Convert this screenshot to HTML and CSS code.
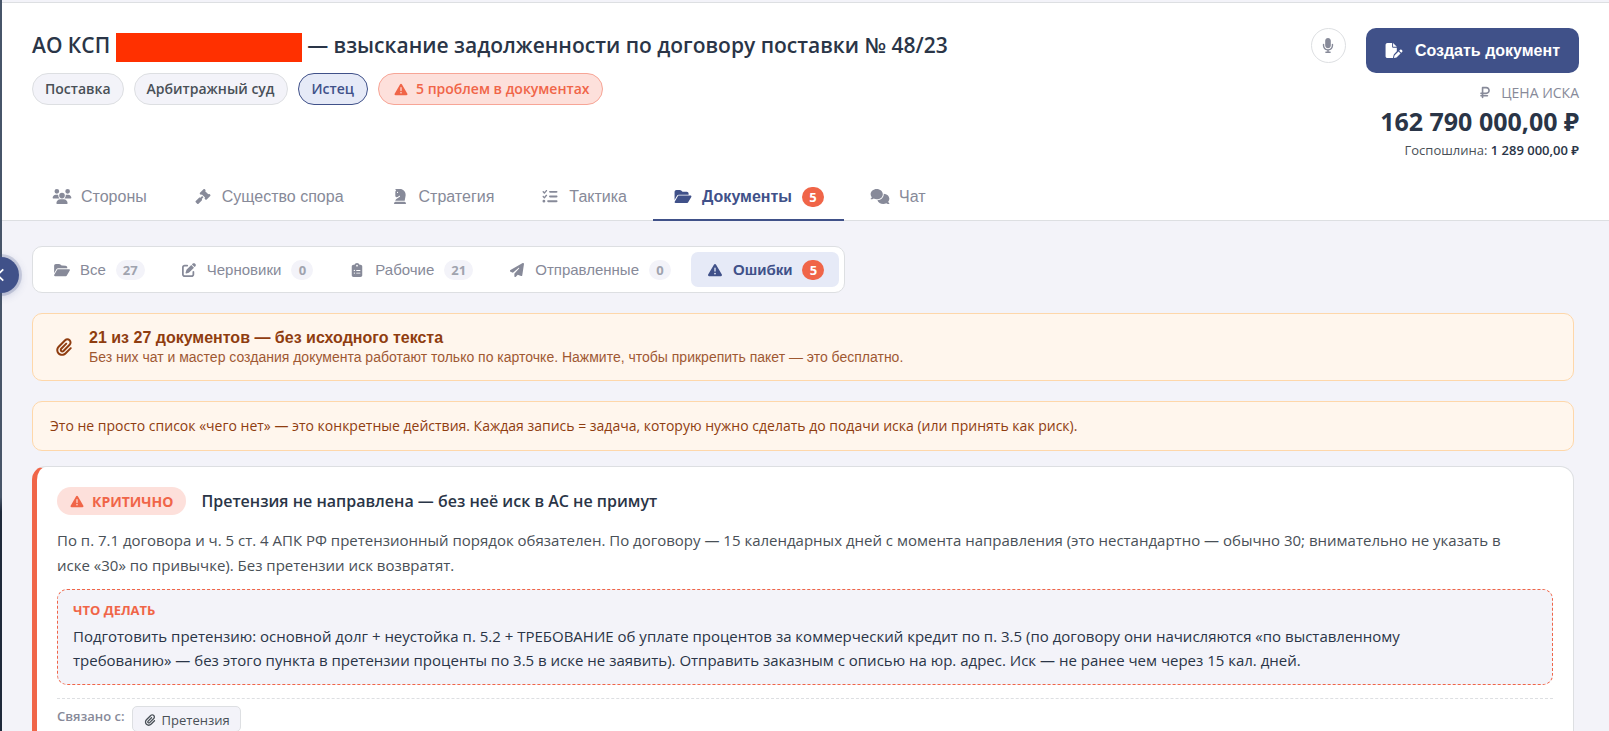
FILE: index.html
```html
<!DOCTYPE html>
<html lang="ru">
<head>
    <meta charset="UTF-8">
    <meta name="viewport" content="width=device-width, initial-scale=1.0">
    <title>Карточка дела</title>
    <link rel="stylesheet" href="styles.css">
</head>
<body>
    <!-- Иконки -->
    <svg class="icon-sprite" aria-hidden="true">
        <symbol id="i-warning" viewBox="0 0 512 512"><path d="M256 32c14.2 0 27.3 7.5 34.5 19.8l216 368c7.3 12.4 7.3 27.7 .2 40.1S486.3 480 472 480L40 480c-14.3 0-27.6-7.7-34.7-20.1s-7-27.8 .2-40.1l216-368C228.7 39.5 241.8 32 256 32zm0 128c-13.3 0-24 10.7-24 24l0 112c0 13.3 10.7 24 24 24s24-10.7 24-24l0-112c0-13.3-10.7-24-24-24zm32 224a32 32 0 1 0 -64 0 32 32 0 1 0 64 0z"/></symbol>
        <symbol id="i-folder" viewBox="0 0 576 512"><path d="M88.7 223.8L0 375.8 0 96C0 60.7 28.7 32 64 32l117.5 0c17 0 33.3 6.7 45.3 18.7l26.5 26.5c12 12 28.3 18.7 45.3 18.7L416 96c35.3 0 64 28.7 64 64l0 32-336 0c-22.8 0-43.8 12.1-55.3 31.8zm27.6 16.1C122.1 230 132.6 224 144 224l400 0c11.5 0 22 6.1 27.7 16.1s5.7 22.2-.1 32.1l-112 192C453.9 474 443.4 480 432 480L32 480c-11.5 0-22-6.1-27.7-16.1s-5.7-22.2 .1-32.1l112-192z"/></symbol>
        <symbol id="i-mic" viewBox="0 0 384 512"><path d="M192 0C139 0 96 43 96 96l0 160c0 53 43 96 96 96s96-43 96-96l0-160c0-53-43-96-96-96zM64 216c0-13.3-10.7-24-24-24s-24 10.7-24 24l0 40c0 89.1 66.2 162.7 152 174.4l0 33.6-48 0c-13.3 0-24 10.7-24 24s10.7 24 24 24l72 0 72 0c13.3 0 24-10.7 24-24s-10.7-24-24-24l-48 0 0-33.6c85.8-11.7 152-85.3 152-174.4l0-40c0-13.3-10.7-24-24-24s-24 10.7-24 24l0 40c0 70.7-57.3 128-128 128s-128-57.3-128-128l0-40z"/></symbol>
        <symbol id="i-users" viewBox="0 0 640 512"><path d="M144 0a80 80 0 1 1 0 160A80 80 0 1 1 144 0zM512 0a80 80 0 1 1 0 160A80 80 0 1 1 512 0zM0 298.7C0 239.8 47.8 192 106.7 192l42.7 0c15.9 0 31 3.5 44.6 9.7c-1.3 7.2-1.9 14.7-1.9 22.3c0 38.2 16.8 72.5 43.3 96c-.2 0-.4 0-.7 0L21.3 320C9.6 320 0 310.4 0 298.7zM405.3 320c-.2 0-.4 0-.7 0c26.6-23.5 43.3-57.8 43.3-96c0-7.6-.7-15-1.9-22.3c13.6-6.3 28.7-9.7 44.6-9.7l42.7 0C592.2 192 640 239.8 640 298.7c0 11.8-9.6 21.3-21.3 21.3l-213.3 0zM224 224a96 96 0 1 1 192 0 96 96 0 1 1 -192 0zM128 485.3C128 411.7 187.7 352 261.3 352l117.3 0C452.3 352 512 411.7 512 485.3c0 14.7-11.9 26.7-26.7 26.7l-330.7 0c-14.7 0-26.7-11.9-26.7-26.7z"/></symbol>
        <symbol id="i-gavel" viewBox="0 0 512 512"><path d="M318.6 9.4c-12.5-12.5-32.8-12.5-45.3 0l-120 120c-12.5 12.5-12.5 32.8 0 45.3l16 16c12.5 12.5 32.8 12.5 45.3 0l4-4L325.4 293.4l-4 4c-12.5 12.5-12.5 32.8 0 45.3l16 16c12.5 12.5 32.8 12.5 45.3 0l120-120c12.5-12.5 12.5-32.8 0-45.3l-16-16c-12.5-12.5-32.8-12.5-45.3 0l-4 4L330.6 74.6l4-4c12.5-12.5 12.5-32.8 0-45.3l-16-16zm-152 288c-12.5-12.5-32.8-12.5-45.3 0l-112 112c-12.5 12.5-12.5 32.8 0 45.3l48 48c12.5 12.5 32.8 12.5 45.3 0l112-112c12.5-12.5 12.5-32.8 0-45.3l-1.4-1.4L272 285.3 226.7 240 168 298.7l-1.4-1.4z"/></symbol>
        <symbol id="i-knight" viewBox="0 0 448 512"><path d="M96 48L82.7 61.3C70.7 73.3 64 89.5 64 106.5l0 132.4c0 10.7 5.3 20.7 14.2 26.6l10.6 7c14.3 9.6 32.7 10.7 48.1 3l3.2-1.6c2.6-1.3 5-2.8 7.3-4.5l49.4-37c6.6-5 15.7-5 22.3 0c10.2 7.7 9.9 23.1-.7 30.3L90.4 350C73.9 361.3 64 380 64 400l320 0 28.9-159c2.1-11.3 3.1-22.8 3.1-34.3l0-14.7C416 86 330 0 224 0L83.8 0C72.9 0 64 8.9 64 19.8c0 7.5 4.2 14.3 10.9 17.7L96 48zm24 68a20 20 0 1 1 40 0 20 20 0 1 1 -40 0zM22.6 473.4c-4.2 4.2-6.6 10-6.6 16C16 501.9 26.1 512 38.6 512l370.7 0c12.5 0 22.6-10.1 22.6-22.6c0-6-2.4-11.8-6.6-16L384 432 64 432 22.6 473.4z"/></symbol>
        <symbol id="i-checklist" viewBox="0 0 512 512"><path d="M152.1 38.2c9.9 8.9 10.7 24 1.8 33.9l-72 80c-4.4 4.9-10.6 7.8-17.2 7.9s-12.9-2.4-17.6-7L7 113C-2.3 103.6-2.3 88.4 7 79s24.6-9.4 33.9 0l22.1 22.1 55.1-61.2c8.9-9.9 24-10.7 33.9-1.8zm0 160c9.9 8.9 10.7 24 1.8 33.9l-72 80c-4.4 4.9-10.6 7.8-17.2 7.9s-12.9-2.4-17.6-7L7 273c-9.4-9.4-9.4-24.6 0-33.9s24.6-9.4 33.9 0l22.1 22.1 55.1-61.2c8.9-9.9 24-10.7 33.9-1.8zM224 96c0-17.7 14.3-32 32-32l224 0c17.7 0 32 14.3 32 32s-14.3 32-32 32l-224 0c-17.7 0-32-14.3-32-32zm0 160c0-17.7 14.3-32 32-32l224 0c17.7 0 32 14.3 32 32s-14.3 32-32 32l-224 0c-17.7 0-32-14.3-32-32zM160 416c0-17.7 14.3-32 32-32l288 0c17.7 0 32 14.3 32 32s-14.3 32-32 32l-288 0c-17.7 0-32-14.3-32-32zM48 368a48 48 0 1 1 0 96 48 48 0 1 1 0-96z"/></symbol>
        <symbol id="i-comments" viewBox="0 0 640 512"><path d="M208 352c114.9 0 208-78.8 208-176S322.9 0 208 0S0 78.8 0 176c0 38.6 14.7 74.3 39.6 103.4c-3.5 9.4-8.7 17.7-14.2 24.7c-4.8 6.2-9.7 11-13.3 14.3c-1.8 1.6-3.3 2.9-4.3 3.7c-.5 .4-.9 .7-1.1 .8l-.2 .2C1 327.2-1.4 334.4 .8 340.9S9.1 352 16 352c21.8 0 43.8-5.6 62.1-12.5c9.2-3.5 17.8-7.4 25.2-11.4C134.1 343.3 169.8 352 208 352zM448 176c0 112.3-99.1 196.9-216.5 207C255.8 457.4 336.4 512 432 512c38.2 0 73.9-8.7 104.7-23.9c7.5 4 16 7.9 25.2 11.4c18.3 6.9 40.3 12.5 62.1 12.5c6.9 0 13.1-4.5 15.2-11.1c2.1-6.6-.2-13.8-5.8-17.9l-.2-.2c-.2-.2-.6-.4-1.1-.8c-1-.8-2.5-2-4.3-3.7c-3.6-3.3-8.5-8.1-13.3-14.3c-5.5-7-10.7-15.4-14.2-24.7c24.9-29 39.6-64.7 39.6-103.4c0-92.8-84.9-168.9-192.6-175.5c.4 5.1 .6 10.3 .6 15.5z"/></symbol>
        <symbol id="i-edit" viewBox="0 0 512 512"><path d="M471.6 21.7c-21.9-21.9-57.3-21.9-79.2 0L362.3 51.7l97.9 97.9 30.1-30.1c21.9-21.9 21.9-57.3 0-79.2L471.6 21.7zm-299.2 220c-6.1 6.1-10.8 13.6-13.5 21.9l-29.6 88.8c-2.9 8.6-.6 18.1 5.8 24.6s15.9 8.7 24.6 5.8l88.8-29.6c8.2-2.7 15.7-7.4 21.9-13.5L437.7 172.3 339.7 74.3 172.4 241.7zM96 64C43 64 0 107 0 160L0 416c0 53 43 96 96 96l256 0c53 0 96-43 96-96l0-96c0-17.7-14.3-32-32-32s-32 14.3-32 32l0 96c0 17.7-14.3 32-32 32L96 448c-17.7 0-32-14.3-32-32l0-256c0-17.7 14.3-32 32-32l96 0c17.7 0 32-14.3 32-32s-14.3-32-32-32L96 64z"/></symbol>
        <symbol id="i-clipboard" viewBox="0 0 384 512"><path d="M192 0c-41.8 0-77.4 26.7-90.5 64L64 64C28.7 64 0 92.7 0 128L0 448c0 35.3 28.7 64 64 64l256 0c35.3 0 64-28.7 64-64l0-320c0-35.3-28.7-64-64-64l-37.5 0C269.4 26.7 233.8 0 192 0zm0 64a32 32 0 1 1 0 64 32 32 0 1 1 0-64zM72 272a24 24 0 1 1 48 0 24 24 0 1 1 -48 0zm104-16l128 0c8.8 0 16 7.2 16 16s-7.2 16-16 16l-128 0c-8.8 0-16-7.2-16-16s7.2-16 16-16zM72 368a24 24 0 1 1 48 0 24 24 0 1 1 -48 0zm88 0c0-8.8 7.2-16 16-16l128 0c8.8 0 16 7.2 16 16s-7.2 16-16 16l-128 0c-8.8 0-16-7.2-16-16z"/></symbol>
        <symbol id="i-plane" viewBox="0 0 512 512"><path d="M498.1 5.6c10.1 7 15.4 19.1 13.5 31.2l-64 416c-1.5 9.7-7.4 18.2-16 23s-18.9 5.4-28 1.6L284 427.7l-68.5 74.1c-8.9 9.7-22.9 12.9-35.2 8.1S160 493.2 160 480l0-83.6c0-4 1.5-7.8 4.2-10.8L331.8 202.8c5.8-6.3 5.6-16-.4-22s-15.7-6.4-22-.7L106 360.8 17.7 316.6C7.1 311.3 .3 300.7 0 288.9s5.9-22.8 16.1-28.7l448-256c10.7-6.1 23.9-5.5 34 1.4z"/></symbol>
        <symbol id="i-clip" viewBox="0 0 448 512"><path d="M364.2 83.8c-24.4-24.4-64-24.4-88.4 0l-184 184c-42.1 42.1-42.1 110.3 0 152.4s110.3 42.1 152.4 0l152-152c10.9-10.9 28.7-10.9 39.6 0s10.9 28.7 0 39.6l-152 152c-64 64-167.6 64-231.6 0s-64-167.6 0-231.6l184-184c46.3-46.3 121.3-46.3 167.6 0s46.3 121.3 0 167.6l-176 176c-28.6 28.6-75 28.6-103.6 0s-28.6-75 0-103.6l144-144c10.9-10.9 28.7-10.9 39.6 0s10.9 28.7 0 39.6l-144 144c-6.7 6.7-6.7 17.7 0 24.4s17.7 6.7 24.4 0l176-176c24.4-24.4 24.4-64 0-88.4z"/></symbol>
        <symbol id="i-ruble" viewBox="0 0 384 512"><path d="M96 32C78.3 32 64 46.3 64 64l0 192-32 0c-17.7 0-32 14.3-32 32s14.3 32 32 32l32 0 0 32-32 0c-17.7 0-32 14.3-32 32s14.3 32 32 32l32 0 0 32c0 17.7 14.3 32 32 32s32-14.3 32-32l0-32 160 0c17.7 0 32-14.3 32-32s-14.3-32-32-32l-160 0 0-32 112 0c79.5 0 144-64.5 144-144s-64.5-144-144-144L96 32zM240 256l-112 0 0-160 112 0c44.2 0 80 35.8 80 80s-35.8 80-80 80z"/></symbol>
        <symbol id="i-filepen" viewBox="0 0 576 512"><path d="M0 64C0 28.7 28.7 0 64 0L224 0l0 128c0 17.7 14.3 32 32 32l128 0 0 125.7-86.8 86.8c-10.3 10.3-17.5 23.1-21 37.2l-18.7 74.9c-2.3 9.2-1.8 18.8 1.3 27.5L64 512c-35.3 0-64-28.7-64-64L0 64zm384 64l-128 0L256 0 384 128zM549.8 235.7l14.4 14.4c15.6 15.6 15.6 40.9 0 56.6l-29.4 29.4-71-71 29.4-29.4c15.6-15.6 40.9-15.6 56.6 0zM311.9 417L441.1 287.8l71 71L382.9 487.9c-4.1 4.1-9.2 7-14.9 8.4l-60.1 15c-5.5 1.4-11.2-.2-15.2-4.2s-5.6-9.7-4.2-15.2l15-60.1c1.4-5.6 4.3-10.8 8.4-14.9z"/></symbol>
    </svg>

    <div class="app">
        <aside class="sidebar"></aside>
        <button class="sidebar-toggle" aria-label="Свернуть меню">
            <svg viewBox="0 0 14 14"><path d="M9 2L4 7l5 5"/></svg>
        </button>

        <main class="main">
            <header class="case-header">
                <div class="case-top">
                    <div class="case-info">
                        <h1>АО КСП<span class="redacted"></span>— взыскание задолженности по договору поставки № 48/23</h1>
                        <div class="tags">
                            <span class="tag">Поставка</span>
                            <span class="tag">Арбитражный суд</span>
                            <span class="tag tag-role">Истец</span>
                            <span class="tag tag-danger"><svg class="icon"><use href="#i-warning"/></svg>5 проблем в документах</span>
                        </div>
                    </div>
                    <div class="case-actions">
                        <button class="mic-btn" aria-label="Голосовой ввод"><svg class="icon"><use href="#i-mic"/></svg></button>
                        <div class="case-price">
                            <button class="create-btn"><svg class="icon"><use href="#i-filepen"/></svg>Создать документ</button>
                            <div class="price-label"><svg class="icon"><use href="#i-ruble"/></svg>ЦЕНА ИСКА</div>
                            <div class="price-value">162 790 000,00 ₽</div>
                            <div class="price-duty">Госпошлина: <strong>1 289 000,00 ₽</strong></div>
                        </div>
                    </div>
                </div>
                <nav class="tabs">
                    <button class="tab"><svg class="icon"><use href="#i-users"/></svg>Стороны</button>
                    <button class="tab"><svg class="icon"><use href="#i-gavel"/></svg>Существо спора</button>
                    <button class="tab"><svg class="icon"><use href="#i-knight"/></svg>Стратегия</button>
                    <button class="tab"><svg class="icon"><use href="#i-checklist"/></svg>Тактика</button>
                    <button class="tab active"><svg class="icon"><use href="#i-folder"/></svg>Документы<span class="count count-danger">5</span></button>
                    <button class="tab"><svg class="icon"><use href="#i-comments"/></svg>Чат</button>
                </nav>
            </header>

            <section class="content">
                <div class="filters">
                    <button class="filter"><svg class="icon"><use href="#i-folder"/></svg>Все<span class="count">27</span></button>
                    <button class="filter"><svg class="icon"><use href="#i-edit"/></svg>Черновики<span class="count">0</span></button>
                    <button class="filter"><svg class="icon"><use href="#i-clipboard"/></svg>Рабочие<span class="count">21</span></button>
                    <button class="filter"><svg class="icon"><use href="#i-plane"/></svg>Отправленные<span class="count">0</span></button>
                    <button class="filter active"><svg class="icon"><use href="#i-warning"/></svg>Ошибки<span class="count count-danger">5</span></button>
                </div>

                <button class="attach-banner">
                    <svg class="icon"><use href="#i-clip"/></svg>
                    <span class="attach-text">
                        <strong>21 из 27 документов — без исходного текста</strong>
                        <small>Без них чат и мастер создания документа работают только по карточке. Нажмите, чтобы прикрепить пакет — это бесплатно.</small>
                    </span>
                </button>

                <div class="hint">Это не просто список «чего нет» — это конкретные действия. Каждая запись = задача, которую нужно сделать до подачи иска (или принять как риск).</div>

                <article class="issue">
                    <div class="issue-head">
                        <span class="severity"><svg class="icon"><use href="#i-warning"/></svg>КРИТИЧНО</span>
                        <h2>Претензия не направлена — без неё иск в АС не примут</h2>
                    </div>
                    <p class="issue-text">По п. 7.1 договора и ч. 5 ст. 4 АПК РФ претензионный порядок обязателен. По договору — 15 календарных дней с момента направления (это нестандартно — обычно 30; внимательно не указать в иске «30» по привычке). Без претензии иск возвратят.</p>
                    <div class="todo">
                        <h3>ЧТО ДЕЛАТЬ</h3>
                        <p>Подготовить претензию: основной долг + неустойка п. 5.2 + ТРЕБОВАНИЕ об уплате процентов за коммерческий кредит по п. 3.5 (по договору они начисляются «по выставленному требованию» — без этого пункта в претензии проценты по 3.5 в иске не заявить). Отправить заказным с описью на юр. адрес. Иск — не ранее чем через 15 кал. дней.</p>
                    </div>
                    <div class="related">
                        <span class="related-label">Связано с:</span>
                        <a class="related-link" href="#"><svg class="icon"><use href="#i-clip"/></svg>Претензия</a>
                    </div>
                </article>
            </section>
        </main>
    </div>
</body>
</html>
```
FILE: styles.css
```css
* {
    box-sizing: border-box;
}

body {
    margin: 0;
    font-family: "Open Sans", "Noto Sans", sans-serif;
    font-size: 15px;
    color: #2a3547;
    background-color: #f3f3f9;
}

h1, h2, h3, p {
    margin: 0;
}

button {
    font-family: "Liberation Sans", Arial, sans-serif;
    border: none;
    background: none;
    padding: 0;
    cursor: pointer;
}

.icon-sprite {
    display: none;
}

.icon {
    width: 20px;
    height: 15px;
    fill: currentColor;
    flex-shrink: 0;
}

.app {
    display: flex;
    position: relative;
    height: 100vh;
    overflow: hidden;
}

.sidebar {
    width: 2px;
    flex-shrink: 0;
    background: linear-gradient(#475569 0, #475569 68%, #1e293b 70%);
}

.sidebar-toggle {
    position: absolute;
    top: 257px;
    left: -17px;
    width: 36px;
    height: 36px;
    border-radius: 50%;
    background-color: #405189;
    box-shadow: 0 0 0 3px rgba(64, 81, 137, 0.2), 0 2px 10px rgba(64, 81, 137, 0.3);
}

.sidebar-toggle svg {
    display: block;
    width: 16px;
    height: 16px;
    margin: 0 auto;
    fill: none;
    stroke: #fff;
    stroke-width: 1.5;
}

.main {
    flex: 1;
    min-width: 0;
}

/* Шапка дела */
.case-header {
    margin-top: 2px;
    padding: 25px 30px 0;
    background-color: #fff;
    border-top: 1px solid #dddfe2;
    border-bottom: 1px solid #dddfe2;
}

.case-top {
    display: flex;
    justify-content: space-between;
    align-items: flex-start;
    gap: 20px;
}

h1 {
    display: flex;
    align-items: center;
    height: 34px;
    font-size: 21px;
    font-weight: 600;
    white-space: nowrap;
}

.redacted {
    width: 186px;
    height: 29px;
    margin: 5px 5px 0 6px;
    background-color: #ff3000;
}

.tags {
    display: flex;
    gap: 10px;
    margin-top: 11px;
}

.tag {
    display: flex;
    align-items: center;
    padding: 5px 12px;
    border: 1px solid #dddfe2;
    border-radius: 16px;
    background-color: #f3f3f9;
    color: #495057;
    font-size: 14px;
    font-weight: 600;
    line-height: 20px;
}

.tag-role {
    padding: 5px 13px;
    background-color: #e6eaf7;
    border-color: #405189;
    color: #405189;
}

.tag-danger {
    background-color: #fde0db;
    border-color: #f7a596;
    color: #f06548;
}

.tag-danger .icon {
    height: 13px;
    margin-right: 5px;
}

.case-actions {
    display: flex;
    gap: 20px;
}

.mic-btn {
    display: flex;
    justify-content: center;
    align-items: center;
    width: 35px;
    height: 35px;
    border: 1px solid #dddfe2;
    border-radius: 50%;
    color: #878a99;
}

.case-price {
    display: flex;
    flex-direction: column;
    align-items: flex-end;
}

.create-btn {
    display: flex;
    align-items: center;
    gap: 11px;
    height: 45px;
    padding: 0 19px 0 18px;
    border-radius: 10px;
    background-color: #405189;
    color: #fff;
    font-size: 16px;
    font-weight: bold;
}

.price-label {
    display: flex;
    align-items: center;
    gap: 6px;
    height: 20px;
    margin-top: 9px;
    color: #878a99;
    font-size: 14px;
}

.price-label .icon {
    height: 13px;
}

.price-value {
    line-height: 38px;
    font-size: 25px;
    font-weight: 700;
}

.price-duty {
    line-height: 20px;
    font-size: 13px;
    color: #495057;
}

.price-duty strong {
    font-weight: 600;
    color: #2a3547;
}

.tabs {
    display: flex;
    gap: 6px;
    margin-top: 11px;
    margin-bottom: -1px;
}

.tab {
    display: flex;
    align-items: center;
    gap: 9px;
    height: 50px;
    padding: 3px 20px 0;
    border-bottom: 2px solid transparent;
    color: #878a99;
    font-size: 16px;
}

.tab.active {
    color: #405189;
    font-weight: bold;
    border-bottom-color: #405189;
}

.count {
    min-width: 22px;
    padding: 0 7px;
    margin-left: 1px;
    border-radius: 10px;
    background-color: #f3f3f9;
    color: #a0a3ae;
    font-family: "Open Sans", "Noto Sans", sans-serif;
    font-size: 13px;
    font-weight: 700;
    line-height: 20px;
    text-align: center;
}

.count-danger {
    background-color: #f06548;
    color: #fff;
}

/* Содержимое вкладки */
.content {
    padding: 25px 35px 0 30px;
}

.filters {
    display: inline-flex;
    gap: 5px;
    padding: 5px;
    border: 1px solid #dddfe2;
    border-radius: 10px;
    background-color: #fff;
    vertical-align: top;
}

.filter {
    display: flex;
    align-items: center;
    gap: 9px;
    height: 35px;
    padding: 0 15px;
    border-radius: 7px;
    color: #878a99;
    font-size: 15px;
}

.filter .icon {
    width: 18px;
    height: 14px;
}

.filter.active {
    background-color: #e6eaf7;
    color: #405189;
    font-weight: bold;
}

.attach-banner {
    display: flex;
    align-items: center;
    gap: 15px;
    width: 100%;
    height: 68px;
    margin-top: 20px;
    padding: 0 21px;
    border: 1px solid #fed7aa;
    border-radius: 10px;
    background-color: #fff6ed;
    color: #8f3d10;
    text-align: left;
}

.attach-banner .icon {
    height: 18px;
}

.attach-text {
    display: flex;
    flex-direction: column;
}

.attach-text strong {
    font-size: 16px;
    line-height: 20px;
}

.attach-text small {
    font-size: 14px;
    line-height: 18px;
    opacity: 0.85;
}

.hint {
    margin-top: 20px;
    padding: 14px 17px;
    border: 1px solid #fed7aa;
    border-radius: 10px;
    background-color: #fff6ed;
    color: #8f3d10;
    font-size: 14px;
    line-height: 20px;
}

.issue {
    margin-top: 15px;
    padding: 20px;
    border: 1px solid #dddfe2;
    border-left: 5px solid #f06548;
    border-radius: 14px;
    background-color: #fff;
}

.issue-head {
    display: flex;
    align-items: center;
    gap: 15px;
}

.severity {
    display: flex;
    align-items: center;
    gap: 5px;
    height: 28px;
    padding: 0 13px 0 10px;
    border-radius: 14px;
    background-color: #fde0db;
    color: #f06548;
    font-size: 14px;
    font-weight: 700;
}

.severity .icon {
    height: 13px;
}

h2 {
    font-size: 16px;
    font-weight: 600;
    line-height: 26px;
}

.issue-text {
    margin-top: 13px;
    padding-right: 24px;
    color: #495057;
    line-height: 25px;
}

.todo {
    margin-top: 11px;
    padding: 10px 15px 12px;
    border: 1px dashed #f06548;
    border-radius: 10px;
    background-color: #f3f3f9;
}

.todo h3 {
    color: #f06548;
    font-size: 13px;
    font-weight: 700;
    line-height: 20px;
}

.todo p {
    margin-top: 4px;
    padding-right: 60px;
    line-height: 24px;
}

.related {
    display: flex;
    gap: 7px;
    margin-top: 13px;
    padding-top: 7px;
    border-top: 1px dashed #dddfe2;
}

.related-label {
    color: #878a99;
    font-size: 13px;
    font-weight: 600;
    line-height: 20px;
}

.related-link {
    display: flex;
    align-items: center;
    gap: 2px;
    height: 26px;
    padding: 2px 10px 0 7px;
    border: 1px solid #dddfe2;
    border-radius: 5px;
    background-color: #f3f3f9;
    color: #495057;
    font-size: 13px;
    text-decoration: none;
}

.related-link .icon {
    height: 12px;
}
```
